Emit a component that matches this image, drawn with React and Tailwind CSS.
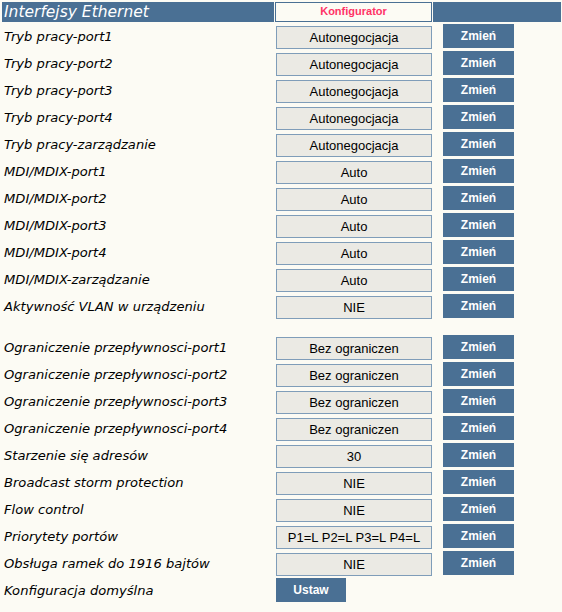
import React from "react";

const rowsA = [
  ["Tryb pracy-port1", "Autonegocjacja"],
  ["Tryb pracy-port2", "Autonegocjacja"],
  ["Tryb pracy-port3", "Autonegocjacja"],
  ["Tryb pracy-port4", "Autonegocjacja"],
  ["Tryb pracy-zarządzanie", "Autonegocjacja"],
  ["MDI/MDIX-port1", "Auto"],
  ["MDI/MDIX-port2", "Auto"],
  ["MDI/MDIX-port3", "Auto"],
  ["MDI/MDIX-port4", "Auto"],
  ["MDI/MDIX-zarządzanie", "Auto"],
  ["Aktywność VLAN w urządzeniu", "NIE"],
];

const rowsB = [
  ["Ograniczenie przepływnosci-port1", "Bez ograniczen"],
  ["Ograniczenie przepływnosci-port2", "Bez ograniczen"],
  ["Ograniczenie przepływnosci-port3", "Bez ograniczen"],
  ["Ograniczenie przepływnosci-port4", "Bez ograniczen"],
  ["Starzenie się adresów", "30"],
  ["Broadcast storm protection", "NIE"],
  ["Flow control", "NIE"],
  ["Priorytety portów", "P1=L P2=L P3=L P4=L"],
  ["Obsługa ramek do 1916 bajtów", "NIE"],
];

const labelCls =
  "h-[27px] flex items-center pl-[2px] pt-px italic text-[13.1px] text-black font-['DejaVu_Sans',sans-serif] whitespace-nowrap";
const btnCls =
  "h-[24px] bg-[#4a7094] text-white font-bold text-[12px] font-['Liberation_Sans',Arial,sans-serif] flex items-center justify-center";

const Row = ({ label, value }) => (
  <>
    <div className={labelCls}>{label}</div>
    <div className="h-[27px] pt-[3px] pl-px">
      <div className="h-[23px] w-[156px] bg-[#ebeae4] border border-[#7f9db9] flex items-center justify-center text-[13px] text-black font-['Liberation_Sans',Arial,sans-serif] whitespace-nowrap">
        {value}
      </div>
    </div>
    <div className="h-[27px] pt-px pl-[10px]">
      <div className={`${btnCls} w-[71px]`}>Zmień</div>
    </div>
  </>
);

export default function App() {
  return (
    <div className="min-h-[612px] w-[562px] bg-[#fcfbf4] pt-[2px] pl-[2px]">
      <div className="grid grid-cols-[272px_157px_128px] gap-x-px">
        <div className="h-[20px] bg-[#4a7094] text-white italic text-[15.5px] pl-[2px] pt-px flex items-center font-['DejaVu_Sans',sans-serif] whitespace-nowrap">
          Interfejsy Ethernet
        </div>
        <div className="h-[20px] border border-[#4a7094] bg-[#fcfbf4] flex items-end justify-center pb-[2px] text-[11px] font-bold text-[#ff3366] font-['Liberation_Sans',Arial,sans-serif]">
          Konfigurator
        </div>
        <div className="h-[20px] bg-[#4a7094]"></div>
        <div className="col-span-3 h-px"></div>

        {rowsA.map(([l, v]) => (
          <Row key={l} label={l} value={v} />
        ))}

        <div className="col-span-3 h-[14px]"></div>

        {rowsB.map(([l, v]) => (
          <Row key={l} label={l} value={v} />
        ))}

        <div className={labelCls}>Konfiguracja domyślna</div>
        <div className="h-[27px] pt-px pl-px">
          <div className={`${btnCls} w-[70px]`}>Ustaw</div>
        </div>
        <div className="h-[27px]"></div>
      </div>
    </div>
  );
}
